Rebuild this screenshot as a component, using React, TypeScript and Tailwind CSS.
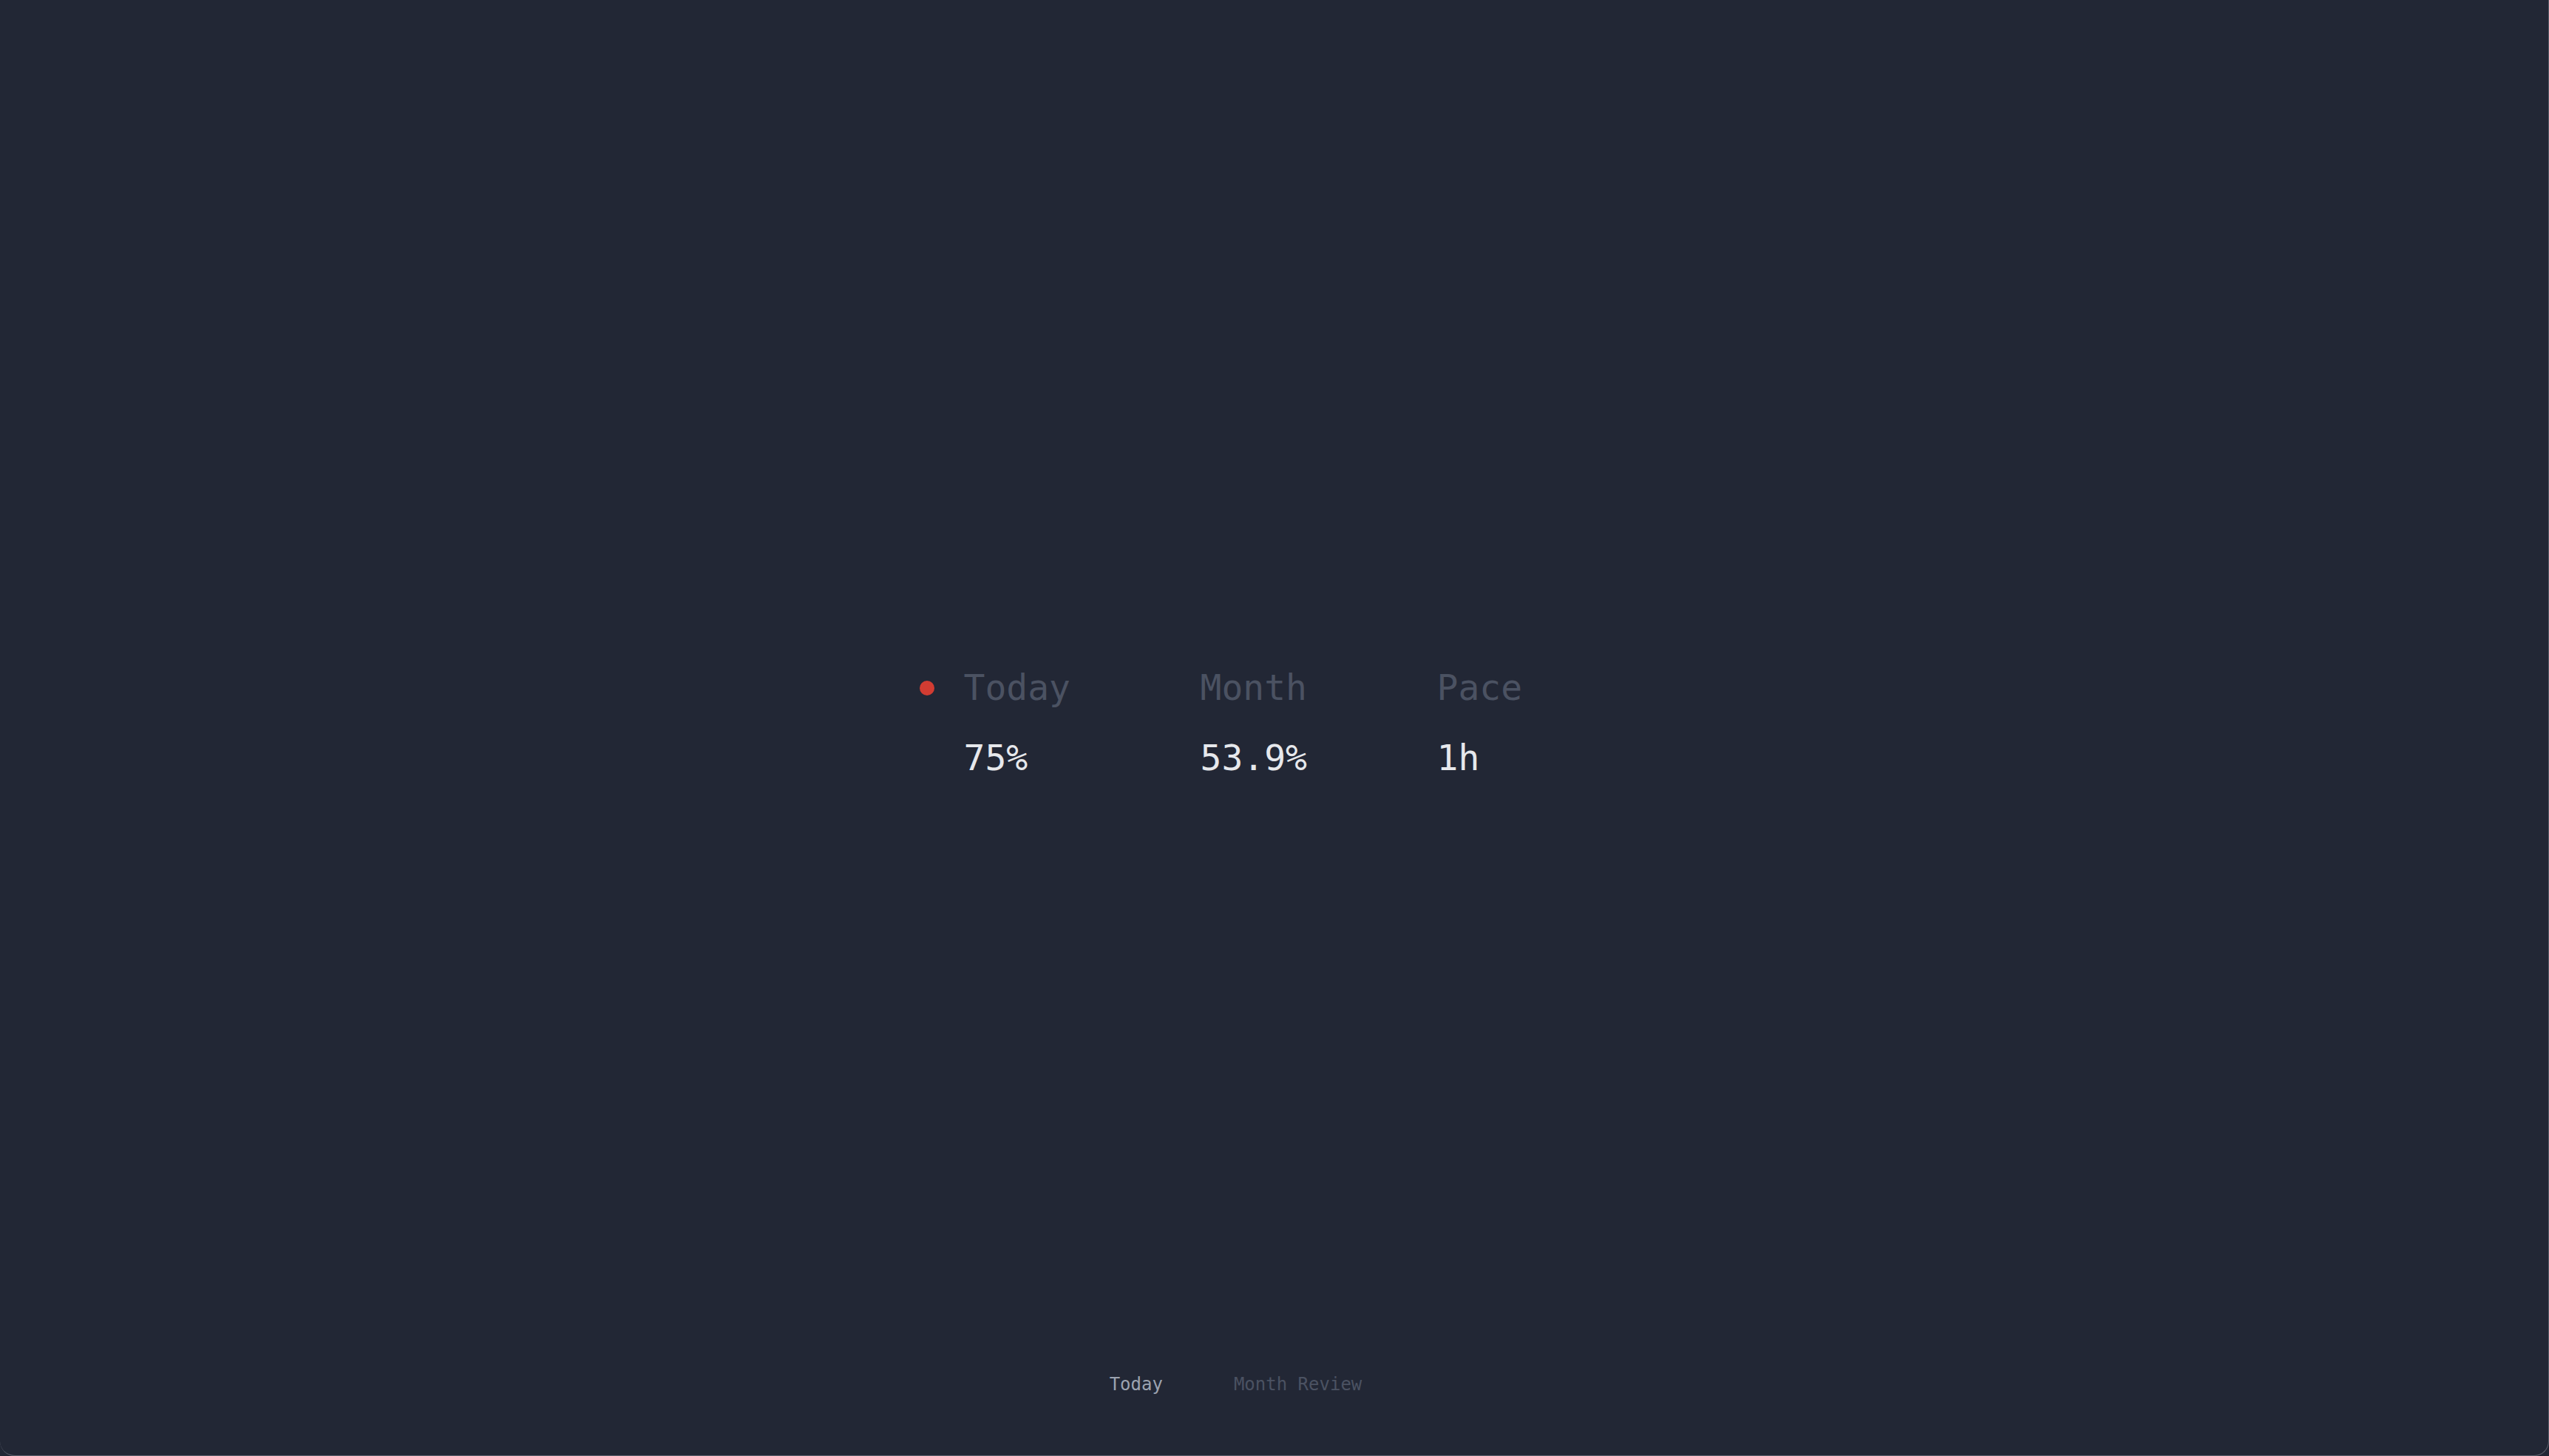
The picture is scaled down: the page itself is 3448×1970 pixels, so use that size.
import React from 'react';

const stats = [
  { label: 'Today', value: '75%', live: true },
  { label: 'Month', value: '53.9%' },
  { label: 'Pace', value: '1h' },
];

const mono = { fontFamily: '"DejaVu Sans Mono", "Liberation Mono", monospace' };

const App = () => {
  return (
    <div className="bg-[#222735] min-h-screen" style={mono}>
      <div className="flex h-[1970px] w-full flex-col rounded-b-[20px] border-r border-b border-[#5b606c] bg-[#222735]">
        <main className="flex flex-1 items-center justify-center pt-[98px]">
          <div className="grid grid-cols-[320px_320px_320px]">
            {stats.map((s) => (
              <div key={s.label} className="relative flex flex-col gap-[47px] pl-[60px]">
                {s.live && (
                  <span className="absolute left-0 top-[15px] h-5 w-5 rounded-full bg-[#d23c32]" />
                )}
                <span className="text-5xl text-[#4b5262]">{s.label}</span>
                <span className="text-5xl text-[#e6e8ec]">{s.value}</span>
              </div>
            ))}
          </div>
        </main>
        <nav className="flex justify-center gap-[96px] pb-[80px] pr-[104px] text-2xl">
          <button className="text-[#9ca3b0]">Today</button>
          <button className="text-[#4b5262]">Month Review</button>
        </nav>
      </div>
    </div>
  );
};

export default App;
